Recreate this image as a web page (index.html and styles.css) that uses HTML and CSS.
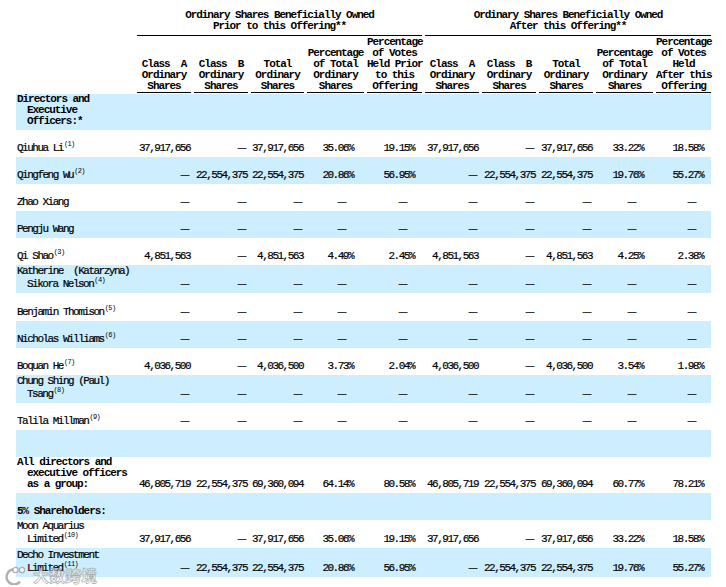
FILE: index.html
```html
<!DOCTYPE html>
<html>
<head>
<meta charset="utf-8">
<title>Beneficial Ownership</title>
<link rel="stylesheet" href="styles.css">
</head>
<body>
<div class="page">
<table class="own">
<colgroup>
<col class="w-label"><col class="w57"><col class="w57"><col class="w56"><col class="w60"><col class="w58"><col class="w57"><col class="w57"><col class="w57"><col class="w60"><col class="w58">
</colgroup>
<thead>
<tr class="grp">
<th></th>
<th colspan="5"><div class="gl">Ordinary Shares Beneficially Owned<br>Prior to this Offering**</div></th>
<th colspan="5"><div class="gl">Ordinary Shares Beneficially Owned<br>After this Offering**</div></th>
</tr>
<tr class="cols">
<th></th>
<th><div class="hl">Class&nbsp; A<br>Ordinary<br>Shares</div></th>
<th><div class="hl">Class&nbsp; B<br>Ordinary<br>Shares</div></th>
<th><div class="hl">Total<br>Ordinary<br>Shares</div></th>
<th><div class="hl">Percentage<br>of Total<br>Ordinary<br>Shares</div></th>
<th><div class="hl">Percentage<br>of Votes<br>Held Prior<br>to this<br>Offering</div></th>
<th><div class="hl">Class&nbsp; A<br>Ordinary<br>Shares</div></th>
<th><div class="hl">Class&nbsp; B<br>Ordinary<br>Shares</div></th>
<th><div class="hl">Total<br>Ordinary<br>Shares</div></th>
<th><div class="hl">Percentage<br>of Total<br>Ordinary<br>Shares</div></th>
<th><div class="hl">Percentage<br>of Votes<br>Held<br>After this<br>Offering</div></th>
</tr>
</thead>
<tbody>
<tr class="bl h36">
<td class="l bold">Directors and<br>Executive<br>Officers:*</td>
<td></td><td></td><td></td><td></td><td></td><td></td><td></td><td></td><td></td><td></td>
</tr>
<tr>
<td class="l">Qiuhua Li<sup>(1)</sup></td>
<td class="n">37,917,656</td><td class="n"><span class="d">—</span></td><td class="n">37,917,656</td><td class="n p1">35.06%</td><td class="n v1">19.15%</td>
<td class="n">37,917,656</td><td class="n"><span class="d">—</span></td><td class="n">37,917,656</td><td class="n p2">33.22%</td><td class="n v2">18.58%</td>
</tr>
<tr class="bl">
<td class="l">Qingfeng Wu<sup>(2)</sup></td>
<td class="n"><span class="d">—</span></td><td class="n">22,554,375</td><td class="n">22,554,375</td><td class="n p1">20.86%</td><td class="n v1">56.95%</td>
<td class="n"><span class="d">—</span></td><td class="n">22,554,375</td><td class="n">22,554,375</td><td class="n p2">19.76%</td><td class="n v2">55.27%</td>
</tr>
<tr>
<td class="l">Zhao Xiang</td>
<td class="n"><span class="d">—</span></td><td class="n"><span class="d">—</span></td><td class="n"><span class="d">—</span></td><td class="n p1"><span class="d">—</span></td><td class="n v1"><span class="d">—</span></td>
<td class="n"><span class="d">—</span></td><td class="n"><span class="d">—</span></td><td class="n"><span class="d">—</span></td><td class="n p2"><span class="d">—</span></td><td class="n v2"><span class="d">—</span></td>
</tr>
<tr class="bl">
<td class="l">Pengju Wang</td>
<td class="n"><span class="d">—</span></td><td class="n"><span class="d">—</span></td><td class="n"><span class="d">—</span></td><td class="n p1"><span class="d">—</span></td><td class="n v1"><span class="d">—</span></td>
<td class="n"><span class="d">—</span></td><td class="n"><span class="d">—</span></td><td class="n"><span class="d">—</span></td><td class="n p2"><span class="d">—</span></td><td class="n v2"><span class="d">—</span></td>
</tr>
<tr>
<td class="l">Qi Shao<sup>(3)</sup></td>
<td class="n">4,851,563</td><td class="n"><span class="d">—</span></td><td class="n">4,851,563</td><td class="n p1">4.49%</td><td class="n v1">2.45%</td>
<td class="n">4,851,563</td><td class="n"><span class="d">—</span></td><td class="n">4,851,563</td><td class="n p2">4.25%</td><td class="n v2">2.38%</td>
</tr>
<tr class="bl h28">
<td class="l">Katherine&nbsp; (Katarzyna)<br>Sikora Nelson<sup>(4)</sup></td>
<td class="n"><span class="d">—</span></td><td class="n"><span class="d">—</span></td><td class="n"><span class="d">—</span></td><td class="n p1"><span class="d">—</span></td><td class="n v1"><span class="d">—</span></td>
<td class="n"><span class="d">—</span></td><td class="n"><span class="d">—</span></td><td class="n"><span class="d">—</span></td><td class="n p2"><span class="d">—</span></td><td class="n v2"><span class="d">—</span></td>
</tr>
<tr class="h28">
<td class="l">Benjamin Thomison<sup>(5)</sup></td>
<td class="n"><span class="d">—</span></td><td class="n"><span class="d">—</span></td><td class="n"><span class="d">—</span></td><td class="n p1"><span class="d">—</span></td><td class="n v1"><span class="d">—</span></td>
<td class="n"><span class="d">—</span></td><td class="n"><span class="d">—</span></td><td class="n"><span class="d">—</span></td><td class="n p2"><span class="d">—</span></td><td class="n v2"><span class="d">—</span></td>
</tr>
<tr class="bl">
<td class="l">Nicholas Williams<sup>(6)</sup></td>
<td class="n"><span class="d">—</span></td><td class="n"><span class="d">—</span></td><td class="n"><span class="d">—</span></td><td class="n p1"><span class="d">—</span></td><td class="n v1"><span class="d">—</span></td>
<td class="n"><span class="d">—</span></td><td class="n"><span class="d">—</span></td><td class="n"><span class="d">—</span></td><td class="n p2"><span class="d">—</span></td><td class="n v2"><span class="d">—</span></td>
</tr>
<tr>
<td class="l">Boquan He<sup>(7)</sup></td>
<td class="n">4,036,500</td><td class="n"><span class="d">—</span></td><td class="n">4,036,500</td><td class="n p1">3.73%</td><td class="n v1">2.04%</td>
<td class="n">4,036,500</td><td class="n"><span class="d">—</span></td><td class="n">4,036,500</td><td class="n p2">3.54%</td><td class="n v2">1.98%</td>
</tr>
<tr class="bl h28">
<td class="l">Chung Shing (Paul)<br>Tsang<sup>(8)</sup></td>
<td class="n"><span class="d">—</span></td><td class="n"><span class="d">—</span></td><td class="n"><span class="d">—</span></td><td class="n p1"><span class="d">—</span></td><td class="n v1"><span class="d">—</span></td>
<td class="n"><span class="d">—</span></td><td class="n"><span class="d">—</span></td><td class="n"><span class="d">—</span></td><td class="n p2"><span class="d">—</span></td><td class="n v2"><span class="d">—</span></td>
</tr>
<tr>
<td class="l">Talila Millman<sup>(9)</sup></td>
<td class="n"><span class="d">—</span></td><td class="n"><span class="d">—</span></td><td class="n"><span class="d">—</span></td><td class="n p1"><span class="d">—</span></td><td class="n v1"><span class="d">—</span></td>
<td class="n"><span class="d">—</span></td><td class="n"><span class="d">—</span></td><td class="n"><span class="d">—</span></td><td class="n p2"><span class="d">—</span></td><td class="n v2"><span class="d">—</span></td>
</tr>
<tr class="bl">
<td class="l"></td>
<td></td><td></td><td></td><td></td><td></td><td></td><td></td><td></td><td></td><td></td>
</tr>
<tr class="h36">
<td class="l bold">All directors and<br>executive officers<br>as a group:</td>
<td class="n">46,805,719</td><td class="n">22,554,375</td><td class="n">69,360,094</td><td class="n p1">64.14%</td><td class="n v1">80.58%</td>
<td class="n">46,805,719</td><td class="n">22,554,375</td><td class="n">69,360,094</td><td class="n p2">60.77%</td><td class="n v2">78.21%</td>
</tr>
<tr class="bl">
<td class="l bold">5% Shareholders:</td>
<td></td><td></td><td></td><td></td><td></td><td></td><td></td><td></td><td></td><td></td>
</tr>
<tr class="h28">
<td class="l">Moon Aquarius<br>Limited<sup>(10)</sup></td>
<td class="n">37,917,656</td><td class="n"><span class="d">—</span></td><td class="n">37,917,656</td><td class="n p1">35.06%</td><td class="n v1">19.15%</td>
<td class="n">37,917,656</td><td class="n"><span class="d">—</span></td><td class="n">37,917,656</td><td class="n p2">33.22%</td><td class="n v2">18.58%</td>
</tr>
<tr class="bl h29">
<td class="l">Decho Investment<br>Limited<sup>(11)</sup></td>
<td class="n"><span class="d">—</span></td><td class="n">22,554,375</td><td class="n">22,554,375</td><td class="n p1">20.86%</td><td class="n v1">56.95%</td>
<td class="n"><span class="d">—</span></td><td class="n">22,554,375</td><td class="n">22,554,375</td><td class="n p2">19.76%</td><td class="n v2">55.27%</td>
</tr>
</tbody>
</table>
</div>
<div class="wm">
<svg class="wm-logo" width="26" height="20" viewBox="0 0 26 20"><path d="M12 4.5 A7.5 7.5 0 1 0 19 16.5" fill="none" stroke="rgba(150,150,150,0.75)" stroke-width="2.4"/><circle cx="14.5" cy="5" r="2.6" fill="rgba(255,255,255,0.6)" stroke="rgba(150,150,150,0.75)" stroke-width="1.2"/><circle cx="21" cy="5" r="2.6" fill="rgba(255,255,255,0.6)" stroke="rgba(150,150,150,0.75)" stroke-width="1.2"/></svg>
<span class="wm-text">大数跨境</span>
</div>
</body>
</html>
```

FILE: styles.css
```css
html, body {
  margin: 0;
  padding: 0;
  background: #fff;
}

body {
  position: relative;
  height: 587px;
  overflow: hidden;
  font-family: "Liberation Mono", "DejaVu Sans Mono", monospace;
  font-size: 11px;
  line-height: 11px;
  letter-spacing: -1.5px;
  color: #000;
}

.page {
  padding: 10px 0 0 16px;
}

.own {
  border-collapse: collapse;
  border-spacing: 0;
  table-layout: fixed;
  width: 695px;
}

.w-label { width: 118px; }
.w56 { width: 56px; }
.w57 { width: 57px; }
.w58 { width: 58px; }
.w60 { width: 60px; }

.own th,
.own td {
  padding: 0;
}

.own th {
  font-weight: bold;
  letter-spacing: -1.05px;
  text-align: center;
  vertical-align: bottom;
  white-space: nowrap;
}

.gl {
  margin-left: 3px;
  padding-bottom: 3px;
  border-bottom: 1px solid #000;
}

.cols th {
  padding-bottom: 1px;
}

.hl {
  margin-left: 3px;
  padding-top: 1px;
  border-bottom: 1px solid #000;
}

.own tbody tr {
  height: 27px;
}

.own tbody tr.h28 { height: 28px; }
.own tbody tr.h29 { height: 29px; }
.own tbody tr.h36 { height: 36px; }

.own tbody td {
  vertical-align: bottom;
  padding-bottom: 3px;
  white-space: nowrap;
  -webkit-text-stroke: 0.2px #000;
}

.own tr.bl td {
  background: #cceeff;
}

.own td.l {
  padding-left: 11px;
  text-indent: -10px;
  white-space: normal;
}

.own td.bold {
  font-weight: bold;
  letter-spacing: -1.05px;
  -webkit-text-stroke: 0;
}

.own td.n {
  text-align: right;
  padding-right: 1px;
}

.own td.p1 { padding-right: 11px; }
.own td.v1 { padding-right: 8px; }
.own td.p2 { padding-right: 10px; }
.own td.v2 { padding-right: 8px; }

.own td.p1 .d,
.own td.v1 .d,
.own td.p2 .d,
.own td.v2 .d {
  margin-right: 6px;
}

.d {
  font-family: "DejaVu Sans", sans-serif;
  font-size: 10px;
  letter-spacing: 0;
  -webkit-text-stroke: 0;
}

sup {
  font-size: 7px;
  line-height: 7px;
  vertical-align: 5px;
  letter-spacing: -0.6px;
  margin-left: 1px;
  -webkit-text-stroke: 0;
}

.wm {
  position: absolute;
  left: 1px;
  top: 565px;
  display: flex;
  align-items: center;
  gap: 6px;
}

.wm-text {
  font-family: "Noto Sans CJK SC", sans-serif;
  font-size: 16px;
  line-height: 20px;
  font-weight: bold;
  letter-spacing: 0;
  color: rgba(255, 255, 255, 0.55);
  -webkit-text-stroke: 0.8px rgba(150, 150, 150, 0.7);
}
```
